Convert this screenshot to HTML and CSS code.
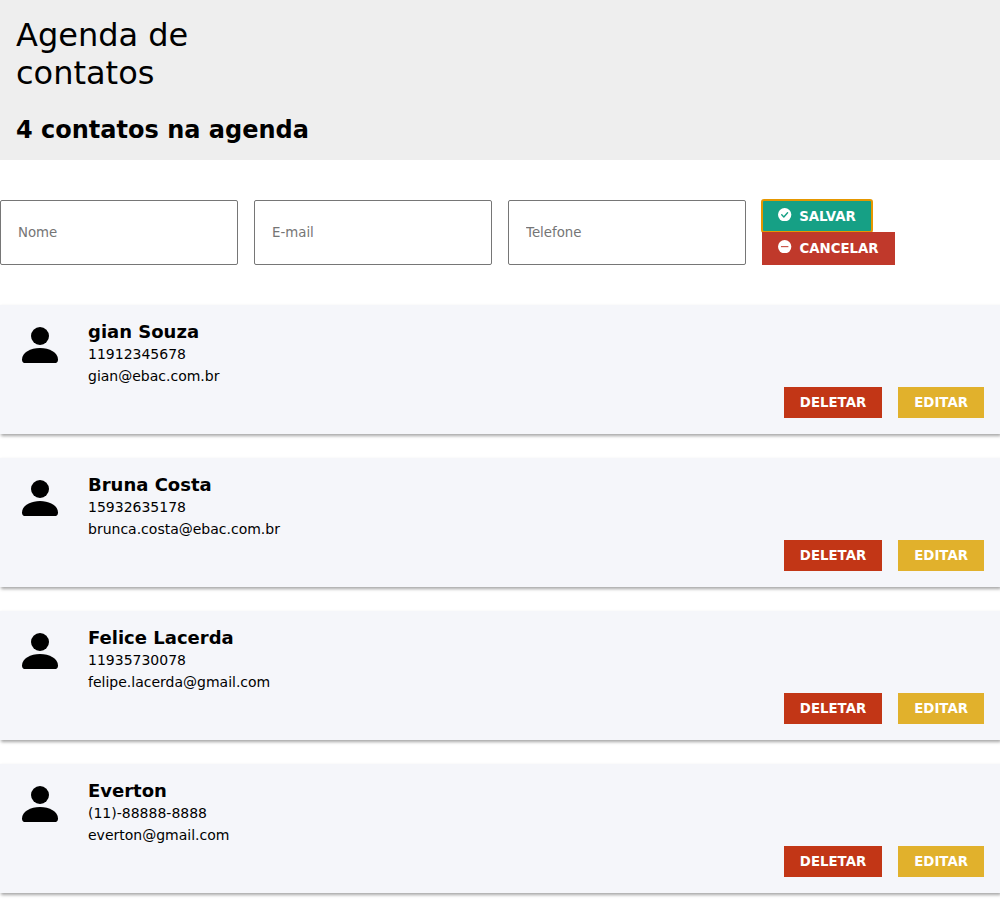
FILE: index.html
```html
<!DOCTYPE html>
<html lang="pt-BR">
<head>
<meta charset="utf-8">
<title>Agenda de contatos</title>
<link rel="stylesheet" href="styles.css">
</head>
<body>
<svg class="sprite" width="0" height="0">
<symbol id="person" viewBox="0 0 40 40"><circle cx="20" cy="11" r="9"/><path d="M2 34.500C2 27.500 10.500 23 20 23S38 27.500 38 34.500C38 36.700 37 38 35.500 38H4.500C3 38 2 36.700 2 34.500z"/></symbol>
</svg>
<header class="header">
<h1 class="title">Agenda de contatos</h1>
<h2 class="count">4 contatos na agenda</h2>
</header>
<main>
<form class="form">
<input class="field" type="text" placeholder="Nome">
<input class="field" type="text" placeholder="E-mail">
<input class="field" type="text" placeholder="Telefone">
<div class="form-actions">
<button class="button save" type="button"><svg class="icon" viewBox="0 0 16 16"><circle cx="8" cy="8" r="8" fill="currentColor"/><path class="mark-save" d="M4.500 8.200l2.500 2.500 4.500-5"/></svg>SALVAR</button>
<button class="button cancel" type="button"><svg class="icon" viewBox="0 0 16 16"><circle cx="8" cy="8" r="8" fill="currentColor"/><path class="mark-cancel" d="M4 8h8"/></svg>CANCELAR</button>
</div>
</form>
<ul class="list">
<li class="card"><svg class="avatar"><use href="#person"/></svg><div class="info"><h3 class="name">gian Souza</h3><p>11912345678</p><p>gian@ebac.com.br</p></div><div class="actions"><button class="button delete">DELETAR</button><button class="button edit">EDITAR</button></div></li>
<li class="card"><svg class="avatar"><use href="#person"/></svg><div class="info"><h3 class="name">Bruna Costa</h3><p>15932635178</p><p>brunca.costa@ebac.com.br</p></div><div class="actions"><button class="button delete">DELETAR</button><button class="button edit">EDITAR</button></div></li>
<li class="card"><svg class="avatar"><use href="#person"/></svg><div class="info"><h3 class="name">Felice Lacerda</h3><p>11935730078</p><p>felipe.lacerda@gmail.com</p></div><div class="actions"><button class="button delete">DELETAR</button><button class="button edit">EDITAR</button></div></li>
<li class="card"><svg class="avatar"><use href="#person"/></svg><div class="info"><h3 class="name">Everton</h3><p>(11)-88888-8888</p><p>everton@gmail.com</p></div><div class="actions"><button class="button delete">DELETAR</button><button class="button edit">EDITAR</button></div></li>
</ul>
</main>
</body>
</html>
```
FILE: styles.css
```css
* { box-sizing: border-box; margin: 0; padding: 0; font-family: "DejaVu Sans", sans-serif; }
body { background: #fff; color: #000; overflow-x: hidden; }
.sprite { display: none; }
.header { height: 160px; padding: 16px; background: #eee; }
.title { width: 238px; font-size: 32px; line-height: 38px; font-weight: 400; }
.count { margin-top: 24px; font-size: 24px; line-height: 28px; }
.form { display: grid; grid-template-columns: repeat(4, 238px); column-gap: 16px; height: 65px; margin: 40px 0; }
.field { width: 100%; height: 65px; padding: 0 17px; border: 1px solid #767676; border-radius: 2px; font-size: 13.333px; }
.field::placeholder { color: #757575; }
.form-actions { display: flex; flex-direction: column; align-items: flex-start; }
.button { border: 0; padding: 8px 16px; color: #fff; font-size: 13.333px; font-weight: 700; line-height: 15px; }
.icon { width: 13.333px; height: 13.333px; margin-right: 7.667px; }
.mark-save, .mark-cancel { fill: none; stroke-width: 1.7; stroke-linecap: round; stroke-linejoin: round; }
.mark-save { stroke: #16a085; }
.mark-cancel { stroke: #c0392b; stroke-width: 1.2; }
.save { width: 110px; height: 32px; background: #16a085; outline: 2px solid #e59700; outline-offset: -1px; border-radius: 2px; }
.cancel { width: 133px; height: 33px; padding-top: 7.5px; padding-bottom: 8.5px; background: #c0392b; }
.list { list-style: none; }
.card { display: flex; height: 129px; margin-bottom: 24px; padding: 16px; background: #f5f6fa; box-shadow: 1px 2px 3px rgba(0, 0, 0, .35); }
.avatar { width: 40px; height: 40px; margin: 4px 28px 0 4px; }
.info { flex: 1; font-size: 14px; line-height: 22px; }
.name { font-size: 18px; line-height: 22px; }
.actions { display: flex; align-self: flex-end; gap: 16px; }
.delete { background: #c23616; }
.edit { background: #e1b12c; }
```
